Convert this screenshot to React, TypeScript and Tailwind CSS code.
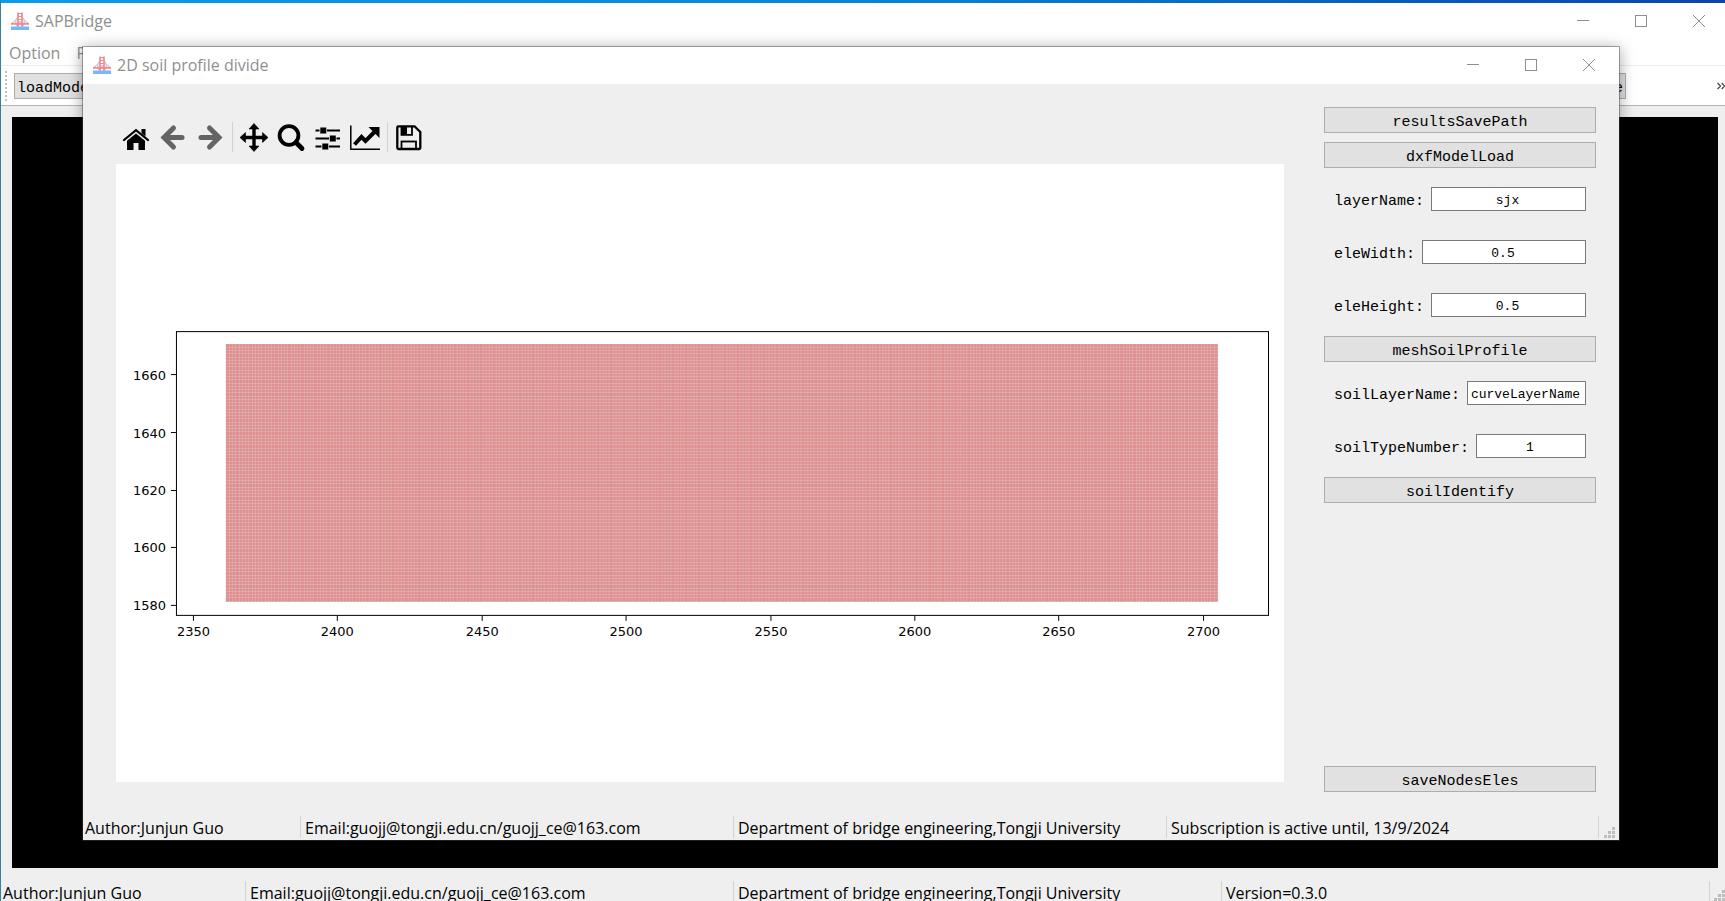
import React from "react";

const UI_FONT = "font-['Open_Sans','Noto_Sans',sans-serif]";
const MONO_FONT = "font-['Liberation_Mono','DejaVu_Sans_Mono',monospace]";

function BridgeLogo() {
  return (
    <svg viewBox="0 0 18 18" className="size-[18px] shrink-0" aria-hidden="true">
      <path d="M8 1.500C7 6 4 9.500 0.500 11.500M10 1.500C11 6 14 9.500 17.500 11.500" fill="none" stroke="#b9b4b8" strokeWidth="1" />
      <path d="M4.500 8.500V12M2.500 10.500V12M13.500 8.500V12M15.500 10.500V12M6 6.500V12M12 6.500V12" stroke="#c4bdc0" strokeWidth="0.800" />
      <path d="M7 0.500V14.500M11 0.500V14.500" stroke="#ee8a93" strokeWidth="1.600" />
      <path d="M7 1.500H11M7 4.500H11M7 7.500H11M7 10H11" stroke="#ee8a93" strokeWidth="1.200" />
      <rect x="0" y="11" width="18" height="1.800" fill="#ee8a93" />
      <rect x="5.500" y="12" width="2.500" height="2.500" fill="#ee8a93" />
      <rect x="10" y="12" width="2.500" height="2.500" fill="#ee8a93" />
      <rect x="0" y="14.500" width="18" height="3.500" fill="#74b9f5" />
    </svg>
  );
}

function WindowControls() {
  const button = "flex h-8 w-3 items-center justify-center text-[#8f8f8f]";
  return (
    <div className="flex gap-[46px]">
      <button className={button} aria-label="Minimize">
        <svg viewBox="0 0 12 12" className="size-3"><path d="M0 5.500H12" stroke="currentColor" /></svg>
      </button>
      <button className={button} aria-label="Maximize">
        <svg viewBox="0 0 12 12" className="size-3"><rect x="0.500" y="0.500" width="11" height="11" fill="none" stroke="currentColor" /></svg>
      </button>
      <button className={button} aria-label="Close">
        <svg viewBox="0 0 12 12" className="size-3"><path d="M0 0L12 12M12 0L0 12" stroke="currentColor" /></svg>
      </button>
    </div>
  );
}

function SizeGrip() {
  const dots = [[8, 0], [4, 4], [8, 4], [0, 8], [4, 8], [8, 8]];
  return (
    <svg viewBox="0 0 11 11" className="size-[11px]" aria-hidden="true">
      {dots.map(([x, y]) => (
        <rect key={`${x}-${y}`} x={x} y={y} width="3" height="3" fill="#bdbdbd" />
      ))}
    </svg>
  );
}

function ToolButton({ label, children }: { label: string; children: React.ReactNode }) {
  return (
    <button aria-label={label} title={label} className="flex size-9 items-center justify-center text-black">
      <svg viewBox="0 0 30 30" className="size-[30px]" fill="none" stroke="currentColor">{children}</svg>
    </button>
  );
}

function PlotToolbar() {
  return (
    <div className="flex items-center gap-px pl-0.5" role="toolbar" aria-label="Plot tools">
      <ToolButton label="Home">
        <path d="M3 18L15 8.200L27 18" strokeWidth="2.200" strokeLinecap="round" />
        <path d="M20.500 7H24.500V14.500L20.500 11Z" fill="currentColor" stroke="none" />
        <path d="M6 18.800L15 11.400L24 18.800V28H17.500V21H12.500V28H6Z" fill="currentColor" stroke="none" />
      </ToolButton>
      <ToolButton label="Back">
        <g className="text-[#646464]" stroke="currentColor" strokeWidth="5" strokeLinecap="round" strokeLinejoin="miter">
          <path d="M15.500 6L6 15.500L15.500 25" />
          <path d="M8 15.500H24" />
        </g>
      </ToolButton>
      <ToolButton label="Forward">
        <g className="text-[#646464]" stroke="currentColor" strokeWidth="5" strokeLinecap="round" strokeLinejoin="miter">
          <path d="M14.500 6L24 15.500L14.500 25" />
          <path d="M22 15.500H6" />
        </g>
      </ToolButton>
      <div className="mr-0.5 ml-[3px] h-[30px] w-px bg-[#d2d2d2]" />
      <ToolButton label="Pan">
        <path d="M15 5V26M4.500 15.500H25.500" strokeWidth="3.400" />
        <path d="M15 1.500L20 7H10ZM15 29.500L20 24H10ZM1 15.500L6.500 10.500V20.500ZM29 15.500L23.500 10.500V20.500Z" fill="currentColor" strokeWidth="0.600" strokeLinejoin="round" />
      </ToolButton>
      <ToolButton label="Zoom">
        <circle cx="13" cy="13.500" r="9.400" strokeWidth="3.800" />
        <path d="M20 20.500L26 26.500" strokeWidth="4.800" strokeLinecap="round" />
      </ToolButton>
      <ToolButton label="Configure subplots">
        <path d="M2.500 8.500H6.500M14 8.500H27M2.500 16.500H16M23.500 16.500H27M2.500 24.500H8.500M16 24.500H27" strokeWidth="1.900" />
        <path d="M7.300 5.500H13.300V11.500H7.300ZM16.800 13.500H22.800V19.500H16.800ZM9.300 21.500H15.300V27.500H9.300Z" fill="currentColor" stroke="none" />
      </ToolButton>
      <ToolButton label="Edit axes">
        <path d="M0.800 3.500V27.200H30" strokeWidth="1.500" />
        <path d="M4.500 22.500L11.500 15L15.500 19L25 9.500" strokeWidth="4" />
        <path d="M18.500 5H29.500V16L26 12.500L22 8.500Z" fill="currentColor" stroke="none" />
      </ToolButton>
      <div className="mr-0.5 ml-[3px] h-[30px] w-px bg-[#d2d2d2]" />
      <ToolButton label="Save">
        <path d="M4.500 4.300H20.500L26.300 10V25.500Q26.300 27 24.800 27H4.500Q3.300 27 3.300 25.800V5.500Q3.300 4.300 4.500 4.300Z" strokeWidth="2.300" />
        <path d="M7.500 4.500V12.800H18V4.500" strokeWidth="1.800" />
        <rect x="7.500" y="4.500" width="5.500" height="8.300" fill="currentColor" stroke="none" />
        <rect x="7.500" y="19.500" width="14.500" height="7.500" strokeWidth="1.800" />
      </ToolButton>
    </div>
  );
}

const X_TICKS = [2350, 2400, 2450, 2500, 2550, 2600, 2650, 2700];
const Y_TICKS = [1660, 1640, 1620, 1600, 1580];
const CELL = 1.4437;
const MESH = { x: 110, y: 180, width: 993, height: 258 };

// Cell borders are snapped to whole pixels, so every few cells leave a wider gap.
function meshLines() {
  let columns = "";
  let rows = "";
  for (let x = 0; x < MESH.width; x += CELL) columns += `M${MESH.x + Math.floor(x)} ${MESH.y}h1v${MESH.height}h-1z`;
  for (let y = 0; y < MESH.height; y += CELL) rows += `M${MESH.x} ${MESH.y + Math.floor(y)}h${MESH.width}v1h-${MESH.width}z`;
  return { columns, rows };
}

function SoilPlot() {
  const { columns, rows } = meshLines();
  return (
    <svg viewBox="0 0 1169 618" className="min-h-0 w-full flex-1 bg-white" role="img" aria-label="Soil profile mesh">
      <rect {...MESH} fill="#dfbdb9" />
      <path d={columns} fill="#e25c66" fillOpacity="0.280" />
      <path d={rows} fill="#e25c66" fillOpacity="0.280" />
      <rect x="60.500" y="167.500" width="1093" height="284" fill="none" stroke="#000" />
      <g fill="#000" fontFamily="'DejaVu Sans', sans-serif" fontSize="13">
        {X_TICKS.map((value, i) => {
          const x = Math.round(77 + i * 144.4) + 0.5;
          return (
            <g key={value}>
              <path d={`M${x} 452v5`} stroke="#000" />
              <text x={x} y="472" textAnchor="middle">{value}</text>
            </g>
          );
        })}
        {Y_TICKS.map((value, i) => {
          const y = Math.round(210 + i * 57.75) + 0.5;
          return (
            <g key={value}>
              <path d={`M55 ${y}h5`} stroke="#000" />
              <text x="50" y={y + 5} textAnchor="end">{value}</text>
            </g>
          );
        })}
      </g>
    </svg>
  );
}

function PushButton({ children }: { children: React.ReactNode }) {
  return (
    <button className="h-[26px] w-full shrink-0 border border-[#adadad] bg-[#e1e1e1] pt-1.5 text-[15px] leading-[18px] text-black">
      {children}
    </button>
  );
}

function Field({ name, value }: { name: string; value: string }) {
  return (
    <div className="flex h-6 items-center gap-[7px]">
      <label htmlFor={name} className="pt-1.5 text-[15px] leading-[18px]">{name}:</label>
      <input
        id={name}
        defaultValue={value}
        className="h-6 min-w-0 flex-1 border border-[#7a7a7a] bg-white pt-0.5 pr-0.5 text-center text-[13px] text-black outline-none"
      />
    </div>
  );
}

function ControlPanel() {
  return (
    <div className={`flex w-[272px] shrink-0 flex-col pt-[23px] pb-6 ${MONO_FONT}`}>
      <div className="flex flex-col gap-[9px]">
        <PushButton>resultsSavePath</PushButton>
        <PushButton>dxfModelLoad</PushButton>
      </div>
      <div className="flex flex-col gap-[29px] px-2.5 py-[19px]">
        <Field name="layerName" value="sjx" />
        <Field name="eleWidth" value="0.5" />
        <Field name="eleHeight" value="0.5" />
      </div>
      <PushButton>meshSoilProfile</PushButton>
      <div className="flex flex-col gap-[29px] px-2.5 py-[19px]">
        <Field name="soilLayerName" value="curveLayerName" />
        <Field name="soilTypeNumber" value="1" />
      </div>
      <PushButton>soilIdentify</PushButton>
      <div className="flex-1" />
      <PushButton>saveNodesEles</PushButton>
    </div>
  );
}

function Divider() {
  return <div className="w-px shrink-0 self-stretch bg-[#d4d4d4]" />;
}

function ProfileDialog() {
  return (
    <section className="absolute top-[46px] right-[105px] bottom-[60px] left-[81px] flex flex-col border border-[#424242]/45 bg-[#efefef] bg-clip-padding shadow-[0_2px_14px_rgba(0,0,0,0.35)]">
      <header className="flex h-[37px] shrink-0 items-center bg-white pr-6 pb-0.5 pl-2.5">
        <BridgeLogo />
        <h2 className="flex-1 pl-1.5 text-base text-[#8f8f8f]">2D soil profile divide</h2>
        <WindowControls />
      </header>
      <div className="flex min-h-0 flex-1 gap-10 pr-[23px] pl-[33px]">
        <div className="flex min-w-0 flex-1 flex-col gap-[9px] pt-[35px] pb-[34px]">
          <PlotToolbar />
          <SoilPlot />
        </div>
        <ControlPanel />
      </div>
      <footer className="flex h-6 shrink-0 pb-0.5 text-base leading-6">
        <span className="w-[217px] pl-0.5">Author:Junjun Guo</span>
        <Divider />
        <span className="w-[432px] pl-1">Email:guojj@tongji.edu.cn/guojj_ce@163.com</span>
        <Divider />
        <span className="w-[432px] pl-1">Department of bridge engineering,Tongji University</span>
        <Divider />
        <span className="flex-1 pl-1">Subscription is active until, 13/9/2024</span>
        <Divider />
        <span className="flex w-5 items-end justify-end pr-1"><SizeGrip /></span>
      </footer>
    </section>
  );
}

export default function App() {
  return (
    <main className={`relative flex h-screen flex-col overflow-hidden border-l border-[#35809c] bg-[#efefef] text-black ${UI_FONT}`}>
      <div className="h-[3px] shrink-0 bg-linear-to-r from-[#0c9ce6] via-[#0a84d4] to-[#0b45a8]" />
      <header className="flex h-9 shrink-0 items-center bg-white pr-5 pl-2.5">
        <BridgeLogo />
        <h1 className="flex-1 pl-1.5 text-base text-[#8f8f8f]">SAPBridge</h1>
        <WindowControls />
      </header>
      <nav className="flex h-[27px] shrink-0 items-center gap-4 border-b border-[#ececec] bg-white pt-0.5 pl-2 text-base text-[#8f8f8f]">
        <button>Option</button>
        <button>Plot</button>
      </nav>
      <div className={`flex h-10 shrink-0 items-center border-b border-[#b4b4b4] bg-white pl-1 ${MONO_FONT}`}>
        <div className="h-[30px] border-l-2 border-dotted border-[#bdbdbd]" />
        <button className="ml-[7px] h-[26px] border border-[#adadad] bg-[#e1e1e1] px-0.5 pt-1.5 text-[15px] leading-[18px]">loadModel</button>
        <div className="flex-1" />
        <button className="h-[26px] border border-[#adadad] bg-[#e1e1e1] px-0.5 pt-1.5 text-[15px] leading-[18px]">save</button>
        <button aria-label="More tools" className="ml-[91px] text-[#444]">
          <svg viewBox="0 0 8 8" className="size-2" fill="none" stroke="currentColor" strokeWidth="1.300">
            <path d="M0.500 1L3.500 4L0.500 7M4.700 1L7.700 4L4.700 7" />
          </svg>
        </button>
      </div>
      <div className="mt-[11px] mr-[7px] ml-[11px] min-h-0 flex-1 bg-black" />
      <footer className="flex h-[33px] shrink-0 pt-[13px] text-base leading-4">
        <span className="w-[244px] pt-1 pl-0.5">Author:Junjun Guo</span>
        <Divider />
        <span className="w-[487px] pt-1 pl-1">Email:guojj@tongji.edu.cn/guojj_ce@163.com</span>
        <Divider />
        <span className="w-[487px] pt-1 pl-1">Department of bridge engineering,Tongji University</span>
        <Divider />
        <span className="flex-1 pt-1 pl-1">Version=0.3.0</span>
        <Divider />
        <span className="flex w-[15px] items-end justify-end"><SizeGrip /></span>
      </footer>
      <ProfileDialog />
    </main>
  );
}
